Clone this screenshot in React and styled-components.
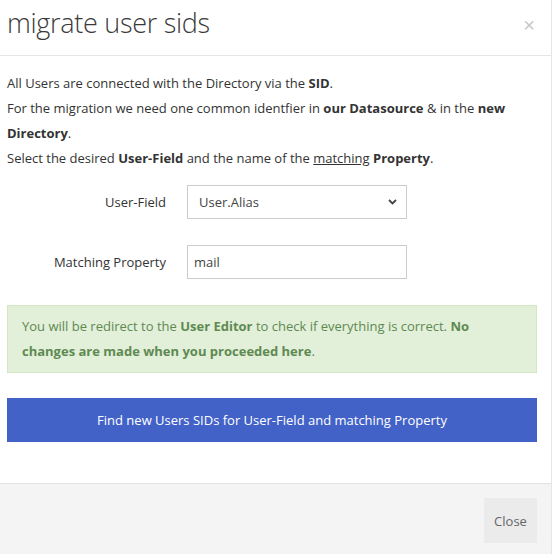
import React from "react";
import styled, { createGlobalStyle } from "styled-components";

const Global = createGlobalStyle`
  html, body { margin: 0; padding: 0; background: #fff; }
  body { font-family: "Open Sans", "Noto Sans", sans-serif; color: #333; }
  * { box-sizing: border-box; }
`;

const Modal = styled.div`
  width: 552px;
  height: 554px;
  display: flex;
  flex-direction: column;
  border-right: 1px solid #e6e6e6;
  background: #fff;
`;

const Header = styled.div`
  height: 56px;
  display: flex;
  align-items: center;
  justify-content: space-between;
  padding: 0 16px 0 7px;
  border-bottom: 1px solid #e5e5e5;
`;

const Title = styled.h4`
  margin: 0;
  font-size: 27px;
  font-weight: 300;
  color: #3a3a3a;
  letter-spacing: -0.3px;
  margin-top: -10px;
`;

const Dismiss = styled.button`
  border: 0;
  background: none;
  padding: 0;
  font-size: 20px;
  line-height: 1;
  color: #c8c8c8;
  cursor: pointer;
  font-family: "Liberation Sans", sans-serif;
  margin-top: -6px;
`;

const Body = styled.div`
  flex: 1;
  padding: 15px 15px 0 7px;
  font-size: 13px;
  line-height: 25px;
`;

const Para = styled.p`
  margin: 0;
`;

const Form = styled.div`
  display: flex;
  flex-direction: column;
  gap: 26px;
  margin-top: 14px;
`;

const Row = styled.div`
  display: grid;
  grid-template-columns: 159px 220px;
  column-gap: 21px;
  align-items: center;
`;

const Label = styled.label`
  text-align: right;
  font-size: 13px;
`;

const SelectWrap = styled.div`
  position: relative;
  height: 34px;
`;

const Select = styled.select`
  appearance: none;
  width: 100%;
  height: 34px;
  border: 1px solid #ccc;
  background: #fff;
  padding: 0 28px 0 11px;
  font: inherit;
  font-size: 13px;
  color: #444;
`;

const Chevron = styled.svg`
  position: absolute;
  right: 10px;
  top: 14px;
  pointer-events: none;
`;

const Input = styled.input`
  width: 100%;
  height: 34px;
  border: 1px solid #ccc;
  padding: 0 6px;
  font: inherit;
  font-size: 13px;
  color: #444;
`;

const Alert = styled.div`
  margin-top: 26px;
  width: 530px;
  padding: 8px 14px;
  background: #e2efd9;
  border: 1px solid #d3e7c6;
  color: #5e8a52;
  font-size: 13px;
  line-height: 25px;
`;

const Primary = styled.button`
  margin-top: 25px;
  width: 530px;
  height: 44px;
  border: 0;
  background: #4262c8;
  color: #fff;
  font: inherit;
  font-size: 13px;
  cursor: pointer;
`;

const Footer = styled.div`
  height: 71px;
  background: #f4f4f4;
  border-top: 1px solid #e2e2e2;
  display: flex;
  justify-content: flex-end;
  align-items: flex-start;
  padding: 14px 14px 0 0;
`;

const Secondary = styled.button`
  width: 53px;
  height: 45px;
  border: 0;
  background: #ebebeb;
  color: #666;
  font: inherit;
  font-size: 13px;
  cursor: pointer;
`;

export default function App() {
  return (
    <>
      <Global />
      <Modal>
        <Header>
          <Title>migrate user sids</Title>
          <Dismiss aria-label="close">×</Dismiss>
        </Header>
        <Body>
          <Para>All Users are connected with the Directory via the <b>SID</b>.</Para>
          <Para>
            For the migration we need one common identfier in <b>our Datasource</b> &amp; in the <b>new Directory</b>.
          </Para>
          <Para>
            Select the desired <b>User-Field</b> and the name of the <u>matching</u> <b>Property</b>.
          </Para>
          <Form>
            <Row>
              <Label>User-Field</Label>
              <SelectWrap>
                <Select defaultValue="User.Alias">
                  <option>User.Alias</option>
                  <option>User.Mail</option>
                </Select>
                <Chevron width="9" height="6" viewBox="0 0 9 6">
                  <path d="M1 1l3.5 3.5L8 1" fill="none" stroke="#444" strokeWidth="1.8" />
                </Chevron>
              </SelectWrap>
            </Row>
            <Row>
              <Label>Matching Property</Label>
              <Input defaultValue="mail" />
            </Row>
          </Form>
          <Alert>
            You will be redirect to the <b>User Editor</b> to check if everything is correct.{" "}
            <b>No changes are made when you proceeded here</b>.
          </Alert>
          <Primary>Find new Users SIDs for User-Field and matching Property</Primary>
        </Body>
        <Footer>
          <Secondary>Close</Secondary>
        </Footer>
      </Modal>
    </>
  );
}
